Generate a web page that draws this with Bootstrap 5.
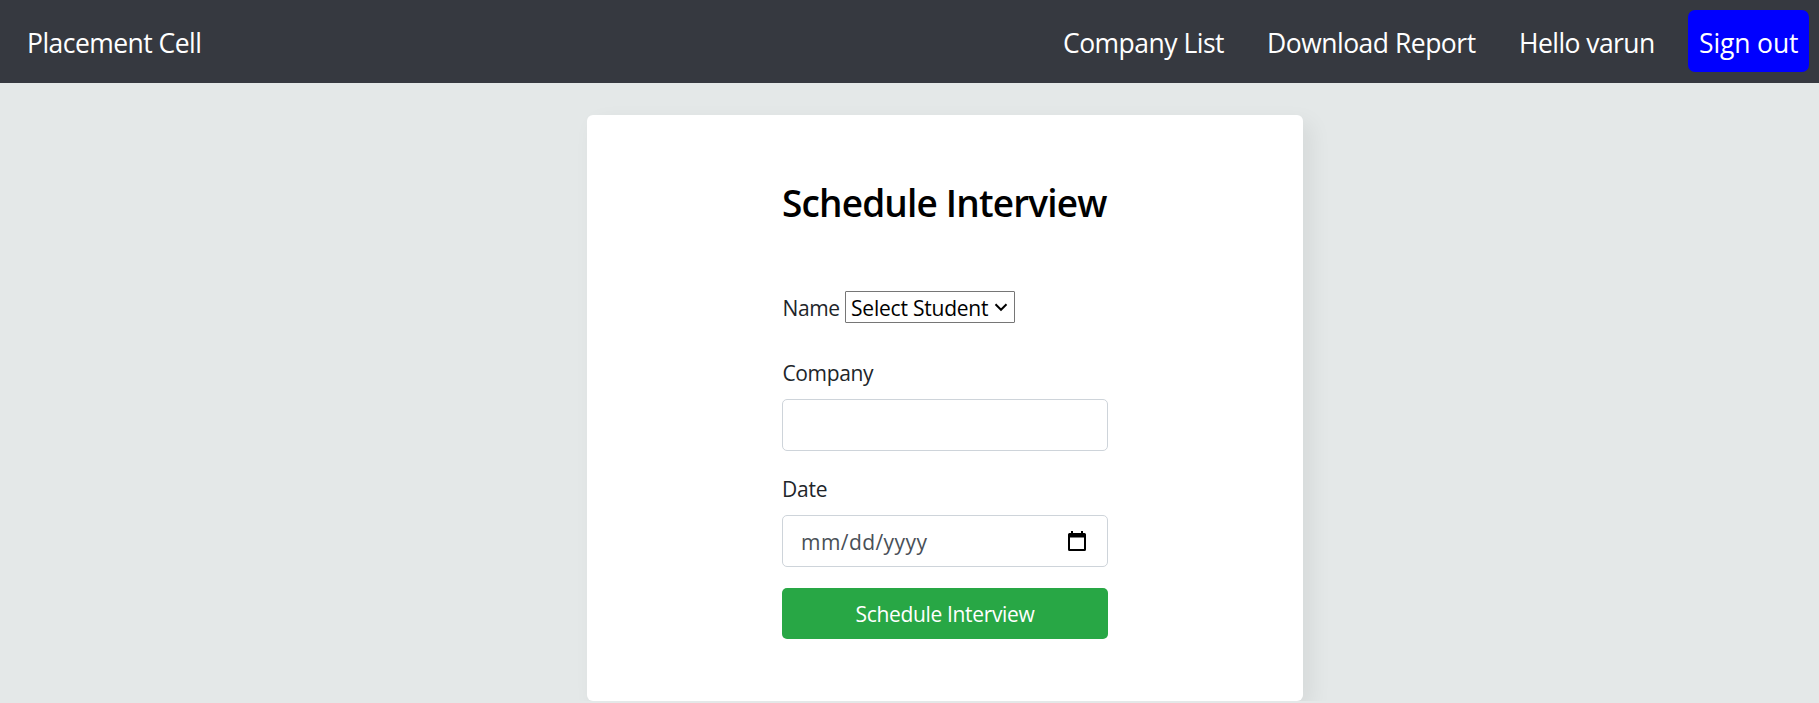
<!DOCTYPE html>
<html lang="en">
<head>
<meta charset="utf-8">
<meta name="viewport" content="width=device-width, initial-scale=1">
<title>Placement Cell</title>
<link rel="stylesheet" href="https://cdn.jsdelivr.net/npm/bootstrap@5.3.0/dist/css/bootstrap.min.css">
<script src="https://cdn.jsdelivr.net/npm/bootstrap@5.3.0/dist/js/bootstrap.bundle.min.js"></script>
<style>
body{font-family:"Open Sans","Noto Sans",sans-serif;background:#e4e8e8;color:#212529;font-size:21px;line-height:32px;overflow:hidden}
.topbar{background:#363940;height:83px;padding:0 10px 1px 27px;font-size:26.5px;line-height:40px}
.topbar a{color:#fff;text-decoration:none;white-space:nowrap}
.topbar .brand{letter-spacing:-.54px;padding-top:4px}
.lnk-company{letter-spacing:-.515px;width:204px;padding-top:4px}
.lnk-report{letter-spacing:-.5px;width:252px;padding-top:4px}
.lnk-hello{letter-spacing:-.567px;width:169px;padding-top:4px}
.signout{background:#00f;border-radius:7px;width:121px;height:62px;padding:13px 0 0 11px;letter-spacing:-.13px}
.panel{width:716px;height:586px;margin-top:32px;margin-left:587px;padding:66px 195px 62px;background:#fff;border-radius:6px;box-shadow:8px 8px 22px rgba(0,0,0,.065)}
.panel h2{font-size:37px;line-height:44px;font-weight:600;color:#000;letter-spacing:-.84px;margin-bottom:66px;white-space:nowrap}
.lbl-name{padding-top:1px;width:63px;height:32px;letter-spacing:-.35px;padding-left:.5px}
.student{width:170px;height:32px;border:1px solid #767676;border-radius:1px;color:#000;background:#fff;padding:2px 0 0 5px;font-size:21px;letter-spacing:-.215px;appearance:none;line-height:28px}
.student-wrap svg{position:absolute;right:7px;top:12px;pointer-events:none}
.lbl-company{margin:34px 0 10px;letter-spacing:-.38px;padding-left:.5px}
.lbl-date{margin:22px 0 10px;letter-spacing:-.2px}
.panel .form-control{height:52px;border:1px solid #ced4da;border-radius:5px;padding:0 21px 0 18px;font-size:21px;color:#495057}
.hint{letter-spacing:.44px;padding-top:3px}
.submit{height:51px;margin-top:21px;background:#28a745;color:#fff;border:0;border-radius:5px;font-size:21px;letter-spacing:-.336px;padding:2px 0 0}
.submit:hover{background:#218838;color:#fff}
</style>
</head>
<body>
<nav class="topbar d-flex align-items-center justify-content-between">
  <a class="brand" href="#">Placement Cell</a>
  <div class="d-flex align-items-center">
    <a class="lnk-company" href="#">Company List</a>
    <a class="lnk-report" href="#">Download Report</a>
    <a class="lnk-hello" href="#">Hello varun</a>
    <a class="signout" href="#">Sign out</a>
  </div>
</nav>
<main class="panel">
  <h2>Schedule Interview</h2>
  <form>
    <div class="d-flex">
      <label class="lbl-name" for="student">Name</label>
      <div class="student-wrap position-relative d-flex">
        <select class="student" id="student"><option>Select Student</option></select>
        <svg width="14" height="9" viewBox="0 0 14 9" fill="none" stroke="#000" stroke-width="2"><path d="M1.500 1.300 7 6.800l5.500-5.500"/></svg>
      </div>
    </div>
    <label class="lbl-company d-block" for="company">Company</label>
    <input class="form-control" id="company" type="text">
    <div class="lbl-date">Date</div>
    <div class="form-control d-flex align-items-center justify-content-between">
      <span class="hint">mm/dd/yyyy</span>
      <svg width="18" height="20" viewBox="0 0 18 20"><path fill="#000" fill-rule="evenodd" d="M3 0h2v2h8V0h2v2h1.500A1.500 1.500 0 0 1 18 3.500v15a1.500 1.500 0 0 1-1.500 1.500h-15A1.500 1.500 0 0 1 0 18.500v-15A1.500 1.500 0 0 1 1.500 2H3zM2 6.500V18h14V6.500z"/></svg>
    </div>
    <button class="submit btn w-100" type="button">Schedule Interview</button>
  </form>
</main>
</body>
</html>
